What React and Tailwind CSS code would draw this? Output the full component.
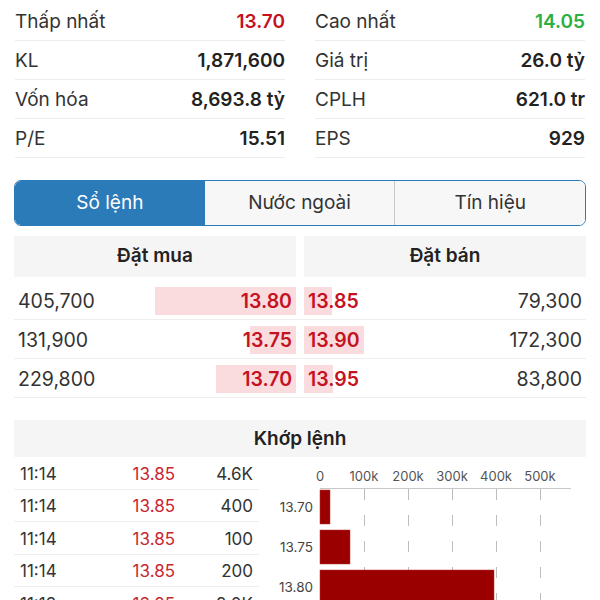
import React from "react";

const stats = [
  [["Thấp nhất", "13.70", "text-[#c4121f]"], ["Cao nhất", "14.05", "text-[#2bb041]"]],
  [["KL", "1,871,600", ""], ["Giá trị", "26.0 tỷ", ""]],
  [["Vốn hóa", "8,693.8 tỷ", ""], ["CPLH", "621.0 tr", ""]],
  [["P/E", "15.51", ""], ["EPS", "929", ""]],
];

const book = [
  { bv: "405,700", bvn: 405700, bp: "13.80", sp: "13.85", sv: "79,300", svn: 79300 },
  { bv: "131,900", bvn: 131900, bp: "13.75", sp: "13.90", sv: "172,300", svn: 172300 },
  { bv: "229,800", bvn: 229800, bp: "13.70", sp: "13.95", sv: "83,800", svn: 83800 },
];
const maxVol = 405700;

const trades = [
  ["11:14", "13.85", "4.6K"],
  ["11:14", "13.85", "400"],
  ["11:14", "13.85", "100"],
  ["11:14", "13.85", "200"],
  ["11:13", "13.85", "2.0K"],
];

function Chart() {
  const x0 = 61;
  const step = 44;
  const labels = ["0", "100k", "200k", "300k", "400k", "500k"];
  const bars = [
    { label: "13.70", w: 10, y: 33 },
    { label: "13.75", w: 30, y: 73 },
    { label: "13.80", w: 174, y: 113 },
  ];
  return (
    <svg width="326" height="143" viewBox="0 0 326 143" className="block">
      {labels.map((l, i) => (
        <text
          key={l}
          x={x0 + i * step}
          y={24}
          textAnchor="middle"
          fontSize="13"
          fill="#555"
          fontFamily="Inter, sans-serif"
        >
          {l}
        </text>
      ))}
      <line x1={x0} y1={31.5} x2={312} y2={31.5} stroke="#c8c8c8" strokeWidth="1" />
      {[1, 2, 3, 4, 5].map((i) => (
        <line
          key={i}
          x1={x0 + i * step + 0.5}
          y1={32}
          x2={x0 + i * step + 0.5}
          y2={143}
          stroke="#bdbdbd"
          strokeWidth="1"
          strokeDasharray="11 15"
        />
      ))}
      {bars.map((b) => (
        <g key={b.label}>
          <rect x={x0} y={b.y} width={b.w} height={34} fill="#9a0000" stroke="#b33" strokeWidth="0.5" />
          <text
            x={54}
            y={b.y + 22}
            textAnchor="end"
            fontSize="13.5"
            fill="#444"
            fontFamily="Inter, sans-serif"
          >
            {b.label}
          </text>
        </g>
      ))}
    </svg>
  );
}

export default function App() {
  return (
    <div className="w-[600px] h-[600px] overflow-hidden bg-white font-['Inter',sans-serif] text-[#2a2a2a]">
      {/* stats */}
      <div className="grid grid-cols-2 gap-x-[30px] px-[15px] pt-[2px]">
        {[0, 1].map((col) => (
          <div key={col} className="flex flex-col">
            {stats.map((row, i) => {
              const [label, value, color] = row[col];
              return (
                <div
                  key={i}
                  className="h-[39px] pt-[2px] flex items-center justify-between border-b border-[#ececec] text-[19px]"
                >
                  <span className="text-[#333]">{label}</span>
                  <span className={`font-semibold ${color || "text-[#222]"}`}>{value}</span>
                </div>
              );
            })}
          </div>
        ))}
      </div>

      {/* tabs */}
      <div className="mx-[14px] mt-[22px] h-[46px] flex rounded-[7px] border-[1.5px] border-[#2b7bb9] overflow-hidden text-[19px]">
        <div className="flex-1 flex items-center justify-center bg-[#2b7bb9] text-white">Sổ lệnh</div>
        <div className="flex-1 flex items-center justify-center bg-[#f7f7f7] text-[#333] border-r border-[#c9c9c9]">
          Nước ngoài
        </div>
        <div className="flex-1 flex items-center justify-center bg-[#f7f7f7] text-[#333]">Tín hiệu</div>
      </div>

      {/* order book */}
      <div className="mx-[14px] mt-[10px]">
        <div className="flex gap-[8px]">
          <div className="flex-1 h-[41px] bg-[#f5f5f5] flex items-center justify-center font-semibold text-[19px] text-[#222]">
            Đặt mua
          </div>
          <div className="flex-1 h-[41px] bg-[#f5f5f5] flex items-center justify-center font-semibold text-[19px] text-[#222]">
            Đặt bán
          </div>
        </div>
        <div className="mt-[4px]">
          {book.map((r) => (
            <div key={r.bp} className="h-[39px] flex gap-[8px] border-b border-[#eeeeee] text-[19.5px]">
              <div className="flex-1 relative flex items-center justify-between px-[4px] pt-[3px]">
                <div
                  className="absolute right-0 top-[6px] bottom-[4px] bg-[#fadcdf]"
                  style={{ width: `${(r.bvn / maxVol) * 50}%` }}
                />
                <span className="relative text-[#333]">{r.bv}</span>
                <span className="relative font-semibold text-[#c4121f]">{r.bp}</span>
              </div>
              <div className="flex-1 relative flex items-center justify-between px-[4px] pt-[3px]">
                <div
                  className="absolute left-0 top-[6px] bottom-[4px] bg-[#fadcdf]"
                  style={{ width: `${(r.svn / maxVol) * 50}%` }}
                />
                <span className="relative font-semibold text-[#c4121f]">{r.sp}</span>
                <span className="relative text-[#333]">{r.sv}</span>
              </div>
            </div>
          ))}
        </div>
      </div>

      {/* matched */}
      <div className="mx-[14px] mt-[22px]">
        <div className="h-[37px] pt-[2px] bg-[#f5f5f5] flex items-center justify-center font-semibold text-[19px] text-[#222]">
          Khớp lệnh
        </div>
        <div className="flex">
          <div className="w-[245px] flex flex-col">
            {trades.map((t, i) => (
              <div key={i} className="h-[32.5px] shrink-0 pt-[3px] flex items-center border-b border-[#eeeeee] px-[6px] text-[17px]">
                <span className="w-[100px] text-[#333]">{t[0]}</span>
                <span className="w-[55px] text-right text-[#c8272f]">{t[1]}</span>
                <span className="flex-1 text-right text-[#333]">{t[2]}</span>
              </div>
            ))}
          </div>
          <div className="flex-1">
            <Chart />
          </div>
        </div>
      </div>
    </div>
  );
}
